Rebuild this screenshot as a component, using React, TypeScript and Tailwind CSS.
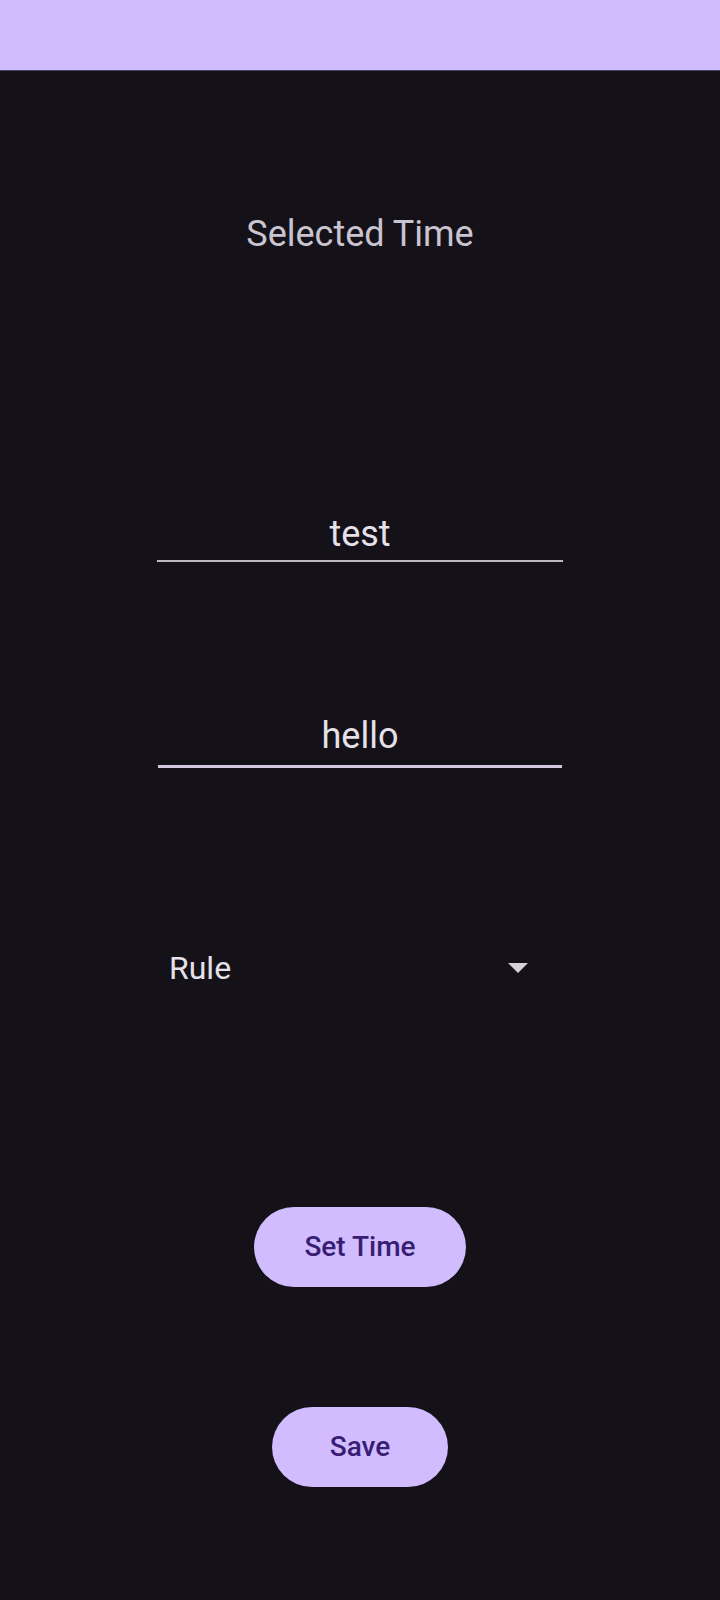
export default function App() {
  return (
    <div className="min-h-[1600px] bg-[#141218] font-['Roboto',sans-serif]">
      <div className="h-[71px] bg-[#d0bcff] border-b border-[#4a4458]" />

      <div className="flex flex-col items-center">
        <div className="mt-[141px] text-[36px] leading-[44px] text-[#cac4d0]">Selected Time</div>

        <div className="mt-[256px] w-[406px] pb-[4px] border-b-2 border-[#bdb8c2] text-center text-[36px] leading-[44px] text-[#e6e0e9]">
          test
        </div>

        <div className="mt-[152px] w-[404px] pb-[7px] border-b-[3px] border-[#d3c8e0] text-center text-[36px] leading-[44px] text-[#e6e0e9]">
          hello
        </div>

        <div className="mt-[180px] w-[406px] pl-[12px] pr-[35px] flex items-center justify-between">
          <span className="text-[32px] leading-[40px] text-[#e6e0e9]">Rule</span>
          <svg width="20" height="10" viewBox="0 0 20 10">
            <path d="M0 0 L20 0 L10 10 Z" fill="#d6d0dc" />
          </svg>
        </div>

        <button className="mt-[219px] w-[212px] h-[80px] rounded-full bg-[#d0bcff] text-[28px] font-medium text-[#381e72]">
          Set Time
        </button>

        <button className="mt-[120px] w-[176px] h-[80px] rounded-full bg-[#d0bcff] text-[28px] font-medium text-[#381e72]">
          Save
        </button>
      </div>
    </div>
  );
}
